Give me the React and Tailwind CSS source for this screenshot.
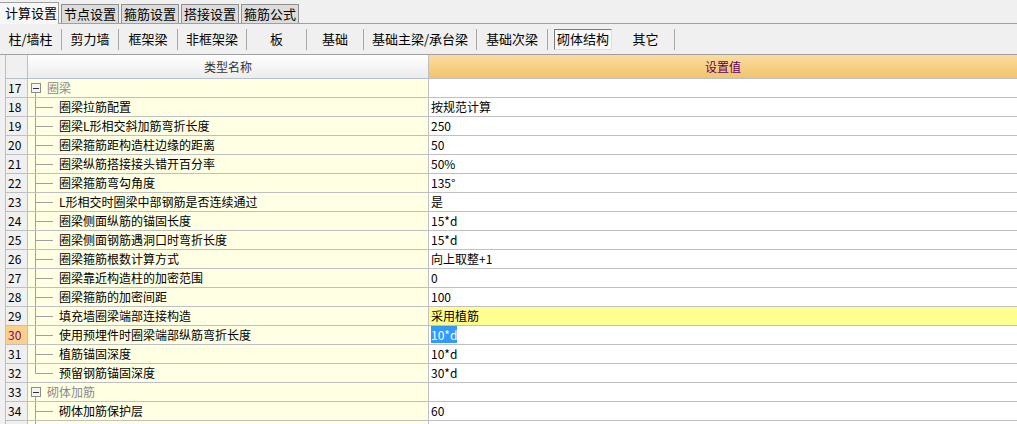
const FONT = { fontFamily: '"Noto Sans CJK SC", "Noto Sans", sans-serif' };

const tabs = ["计算设置", "节点设置", "箍筋设置", "搭接设置", "箍筋公式"];

const tools = [
  { label: "柱/墙柱", w: "w-[62px]" },
  { label: "剪力墙", w: "w-[57px]" },
  { label: "框架梁", w: "w-[59px]" },
  { label: "非框架梁", w: "w-[69px]" },
  { label: "板", w: "w-[60px]" },
  { label: "基础", w: "w-[57px]" },
  { label: "基础主梁/承台梁", w: "w-[113px]" },
  { label: "基础次梁", w: "w-[71px]" },
];

const rows = [
  { n: 17, group: true, name: "圈梁" },
  { n: 18, name: "圈梁拉筋配置", value: "按规范计算" },
  { n: 19, name: "圈梁L形相交斜加筋弯折长度", value: "250" },
  { n: 20, name: "圈梁箍筋距构造柱边缘的距离", value: "50" },
  { n: 21, name: "圈梁纵筋搭接接头错开百分率", value: "50%" },
  { n: 22, name: "圈梁箍筋弯勾角度", value: "135°" },
  { n: 23, name: "L形相交时圈梁中部钢筋是否连续通过", value: "是" },
  { n: 24, name: "圈梁侧面纵筋的锚固长度", value: "15*d" },
  { n: 25, name: "圈梁侧面钢筋遇洞口时弯折长度", value: "15*d" },
  { n: 26, name: "圈梁箍筋根数计算方式", value: "向上取整+1" },
  { n: 27, name: "圈梁靠近构造柱的加密范围", value: "0" },
  { n: 28, name: "圈梁箍筋的加密间距", value: "100" },
  { n: 29, name: "填充墙圈梁端部连接构造", value: "采用植筋", hl: true },
  { n: 30, name: "使用预埋件时圈梁端部纵筋弯折长度", value: "10*d", sel: true },
  { n: 31, name: "植筋锚固深度", value: "10*d" },
  { n: 32, name: "预留钢筋锚固深度", value: "30*d", last: true },
  { n: 33, group: true, name: "砌体加筋" },
  { n: 34, name: "砌体加筋保护层", value: "60" },
  { n: 35, name: "", value: "", blank: true },
];

function Tree({ group, last }) {
  if (group) {
    return (
      <svg width="19" height="18" className="shrink-0">
        <line x1="7.5" y1="14" x2="7.5" y2="18" stroke="#a0a0a0" />
        <rect x="3.5" y="4.5" width="9" height="9" fill="#f4f4f4" stroke="#8c8c8c" />
        <line x1="5" y1="9.5" x2="11" y2="9.5" stroke="#333" />
      </svg>
    );
  }
  return (
    <svg width="31" height="18" className="shrink-0">
      <line x1="7.5" y1="-1" x2="7.5" y2={last ? 9.5 : 18} stroke="#a0a0a0" />
      <line x1="7.5" y1="9.5" x2="25" y2="9.5" stroke="#a0a0a0" />
    </svg>
  );
}

function Row({ r }) {
  const numCls = r.sel
    ? "bg-[#fcd08a] text-[#800080]"
    : "bg-[#f0f0f0] text-black";
  return (
    <div className="flex h-[19px] border-b border-[#c0c0c0]">
      <div className={`w-[23px] shrink-0 border-x border-[#c0c0c0] pl-[2px] leading-[18px] ${numCls}`}>
        {r.blank ? "" : r.n}
      </div>
      <div className="w-[401px] shrink-0 border-r border-[#c0c0c0] bg-[#ffffe4] flex items-center leading-[18px]">
        <Tree group={r.group} last={r.last} />
        <span className={r.group ? "text-[#8a8a8a]" : "text-black"}>{r.name}</span>
      </div>
      <div className={`flex-1 pl-[2px] leading-[18px] ${r.hl ? "bg-[#ffff90]" : "bg-white"}`}>
        {r.sel ? (
          <span className="bg-[#3399ff] text-white">{r.value}</span>
        ) : (
          <span>{r.value}</span>
        )}
      </div>
    </div>
  );
}

export default function App() {
  return (
    <div className="w-[1017px] h-[424px] overflow-hidden bg-[#f0f0f0] text-[12px] text-black" style={FONT}>
      <div className="h-[24px] flex items-end gap-[2px] border-b border-[#a0a0a0]">
        {tabs.map((t, i) =>
          i === 0 ? (
            <div key={t} className="w-[59px] h-[22px] -mb-px bg-[#f7f7f7] border-t border-r border-[#a0a0a0] text-[13px] leading-[20px] pl-[5px]">
              {t}
            </div>
          ) : (
            <div key={t} className="w-[58px] h-[19px] bg-[#dcdcdc] border-t border-x border-[#909090] text-[13px] leading-[18px] text-center">
              {t}
            </div>
          )
        )}
      </div>
      <div className="h-[31px] flex items-center border-b border-[#a0a0a0] text-[13px]">
        {tools.map((t) => (
          <div key={t.label} className={`${t.w} h-[21px] flex items-center justify-center border-r border-[#a8a8a8]`}>
            {t.label}
          </div>
        ))}
        <div className="w-[69px] h-[21px] flex items-center pl-[6px]">
          <div className="w-[58px] h-[21px] flex items-center justify-center bg-[#f8f8f8] border border-t-[#7a7a7a] border-l-[#7a7a7a] border-b-[#e0e0e0] border-r-[#e0e0e0]">
            砌体结构
          </div>
        </div>
        <div className="w-[58px] h-[21px] flex items-center justify-center border-r border-[#a8a8a8]">
          其它
        </div>
      </div>
      <div className="pl-[5px]">
        <div className="flex h-[24px] border-b border-[#b8c0c8]">
          <div className="w-[23px] shrink-0 border-x border-[#c0c0c0] bg-[#f0f0f0]" />
          <div className="w-[401px] shrink-0 border-r border-[#c0c0c0] bg-gradient-to-b from-white to-[#ececec] flex items-center justify-center text-[#333]">
            类型名称
          </div>
          <div className="flex-1 bg-gradient-to-b from-[#fbdca0] to-[#f1c46c] flex items-center justify-center text-[#600060]">
            设置值
          </div>
        </div>
        {rows.map((r) => (
          <Row key={r.n} r={r} />
        ))}
      </div>
    </div>
  );
}
